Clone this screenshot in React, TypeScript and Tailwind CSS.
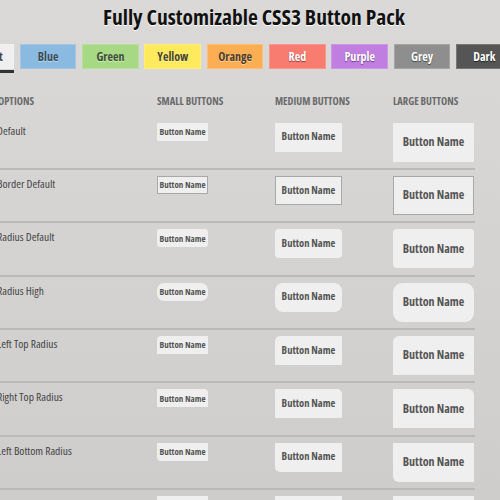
const TABS = [
  { name: 'Default', bg: 'bg-[#efefef]', text: 'text-[#444] [text-shadow:0_1px_0_#fff]', active: true },
  { name: 'Blue', bg: 'bg-[#8bbae0]', text: 'text-[#3e4c58] [text-shadow:0_1px_0_#b9d8f0]' },
  { name: 'Green', bg: 'bg-[#a7d985]', text: 'text-[#414b3a] [text-shadow:0_1px_0_#cdeeb5]' },
  { name: 'Yellow', bg: 'bg-[#ffe95c]', text: 'text-[#4b4630] [text-shadow:0_1px_0_#fff5a8]' },
  { name: 'Orange', bg: 'bg-[#fdae53]', text: 'text-[#4f4030] [text-shadow:0_1px_0_#ffd39c]' },
  { name: 'Red', bg: 'bg-[#f87c70]', text: 'text-white [text-shadow:0_1px_1px_#8a3c35]' },
  { name: 'Purple', bg: 'bg-[#c07ee0]', text: 'text-white [text-shadow:0_1px_1px_#6a3c80]' },
  { name: 'Grey', bg: 'bg-[#8e8e8e]', text: 'text-white [text-shadow:0_1px_1px_#444]' },
  { name: 'Dark', bg: 'bg-[#555555]', text: 'text-white [text-shadow:0_1px_1px_#222]' },
]

// per row: classes for small / medium / large
const ROWS = [
  { label: 'Default', s: '', m: '', l: '' },
  {
    label: 'Border Default',
    s: 'border border-[#a8a8a8]',
    m: 'border border-[#a8a8a8]',
    l: 'border border-[#a8a8a8]',
  },
  { label: 'Radius Default', s: 'rounded-[3px]', m: 'rounded-[4px]', l: 'rounded-[4px]' },
  { label: 'Radius High', s: 'rounded-[7px]', m: 'rounded-[8px]', l: 'rounded-[9px]' },
  { label: 'Left Top Radius', s: 'rounded-tl-[4px]', m: 'rounded-tl-[5px]', l: 'rounded-tl-[6px]' },
  { label: 'Right Top Radius', s: 'rounded-tr-[4px]', m: 'rounded-tr-[5px]', l: 'rounded-tr-[6px]' },
  { label: 'Left Bottom Radius', s: 'rounded-bl-[4px]', m: 'rounded-bl-[5px]', l: 'rounded-bl-[6px]' },
  { label: 'Right Bottom Radius', s: 'rounded-br-[4px]', m: 'rounded-br-[5px]', l: 'rounded-br-[6px]' },
]

const btn = 'flex items-center justify-center bg-[#efefef] font-bold text-[#555] whitespace-nowrap'

export default function App() {
  return (
    <div className="h-[500px] w-[500px] overflow-hidden bg-gradient-to-b from-[#dad9d8] to-[#cecdcc] font-['Open_Sans',sans-serif] [font-stretch:75%]">
      <h1 className="pt-[4px] pl-[8px] text-center text-[21.5px] leading-[26px] font-bold text-[#111] [text-shadow:0_1px_0_#fff]">
        Fully Customizable CSS3 Button Pack
      </h1>

      <div className="mt-[14px] ml-[-42.5px] flex items-start gap-[5.83px]">
        {TABS.map((tab) => (
          <div key={tab.name} className="flex w-[56.5px] shrink-0 flex-col">
            <div
              className={`flex h-[25px] items-center justify-center border border-white/20 text-[12px] font-bold ${tab.bg} ${tab.text}`}
            >
              {tab.name}
            </div>
            {tab.active && <div className="mt-px h-[3px] bg-[#333]" />}
          </div>
        ))}
      </div>

      <div className="ml-[-3px] w-[478px]">
        <div className="mt-[22px] grid h-[21.67px] grid-cols-[160px_118px_118px_82px] text-[10.5px] leading-[12px] font-bold text-[#6a6a6a] uppercase">
          <div className="pl-[1px]">Options</div>
          <div>Small Buttons</div>
          <div>Medium Buttons</div>
          <div>Large Buttons</div>
        </div>

        {ROWS.map((row) => (
          <div
            key={row.label}
            className="grid h-[53.33px] shrink-0 grid-cols-[160px_118px_118px_82px] items-start border-b-2 border-[#bab9b8] pt-[6px]"
          >
            <div className="pt-[1px] text-[11.5px] leading-[14px] text-[#444]">{row.label}</div>
            <div>
              <div className={`${btn} h-[18px] w-[51px] text-[9px] ${row.s}`}>Button Name</div>
            </div>
            <div>
              <div className={`${btn} h-[29px] w-[67px] text-[10.5px] ${row.m}`}>Button Name</div>
            </div>
            <div>
              <div className={`${btn} h-[39px] w-[81px] text-[12px] ${row.l}`}>Button Name</div>
            </div>
          </div>
        ))}
      </div>
    </div>
  )
}
